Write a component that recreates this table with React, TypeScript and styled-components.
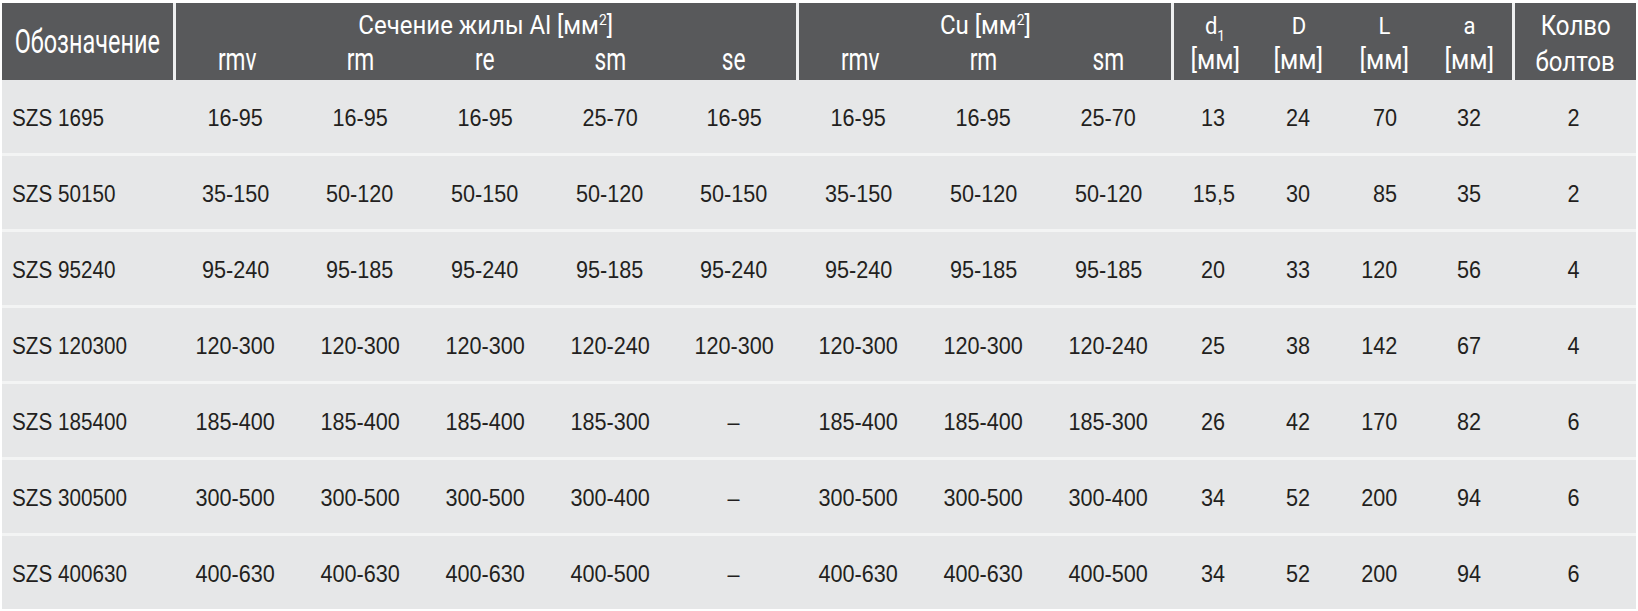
import styled, { createGlobalStyle } from "styled-components";

const GlobalStyle = createGlobalStyle`
  html, body {
    margin: 0;
    padding: 0;
    background: #ffffff;
  }
  body {
    width: 1638px;
    height: 611px;
    overflow: hidden;
  }
`;

// column widths measured from the sheet
const COLS =
  "171px 125px 124px 126px 124px 124px 125px 125px 125px 85px 85px 86px 85px 124px";

const Table = styled.div`
  margin: 3px 0 0 2px;
  width: 1634px;
  display: flex;
  flex-direction: column;
`;

const Head = styled.div`
  display: grid;
  grid-template-columns: ${COLS};
  grid-template-rows: 40px 37px;
  background: #58595b;
  color: #ffffff;
  font-family: Roboto, "Liberation Sans", sans-serif;
`;

interface HeadCellProps {
  $col: string;
  $row: string;
  $divider?: boolean;
  $middle?: boolean;
  $pad?: number;
}

const HeadCell = styled.div<HeadCellProps>`
  grid-column: ${(p) => p.$col};
  grid-row: ${(p) => p.$row};
  display: flex;
  justify-content: center;
  align-items: ${(p) => (p.$middle ? "center" : "flex-end")};
  padding-bottom: ${(p) => p.$pad ?? 0}px;
  border-left: ${(p) => (p.$divider ? "3px solid #eeeff0" : "none")};
  box-sizing: border-box;
`;

const Label = styled.span<{ $size: number; $squeeze: number }>`
  display: inline-block;
  font-size: ${(p) => p.$size}px;
  line-height: 1;
  white-space: nowrap;
  transform: scaleX(${(p) => p.$squeeze});

  sup {
    font-size: 0.58em;
    vertical-align: 0.62em;
    line-height: 0;
  }
  sub {
    font-size: 0.62em;
    vertical-align: -0.45em;
    line-height: 0;
  }
`;

const Body = styled.div`
  display: flex;
  flex-direction: column;
  gap: 3px;
  background: #f3f4f4;
`;

const Row = styled.div`
  display: grid;
  grid-template-columns: ${COLS};
  height: 73px;
  background: #e6e7e8;
`;

type Align = "left" | "center" | "right";

const Cell = styled.div<{ $align: Align }>`
  display: flex;
  align-items: center;
  justify-content: ${(p) =>
    p.$align === "left" ? "flex-start" : p.$align === "right" ? "flex-end" : "center"};
  padding: 4px ${(p) => (p.$align === "right" ? 30 : 0)}px 0
    ${(p) => (p.$align === "left" ? 10 : 0)}px;
  font-family: "Liberation Sans", Arial, sans-serif;
  font-size: 23.5px;
  color: #231f20;
`;

const Value = styled.span<{ $align: Align }>`
  display: inline-block;
  line-height: 1;
  white-space: nowrap;
  transform: scaleX(${(p) => (p.$align === "left" ? 0.88 : 0.92)});
  transform-origin: ${(p) => p.$align} center;
`;

const align: Align[] = [
  "left", "center", "center", "center", "center", "center", "center",
  "center", "center", "center", "center", "right", "center", "center",
];

const rows: string[][] = [
  ["SZS 1695", "16-95", "16-95", "16-95", "25-70", "16-95", "16-95", "16-95", "25-70", "13", "24", "70", "32", "2"],
  ["SZS 50150", "35-150", "50-120", "50-150", "50-120", "50-150", "35-150", "50-120", "50-120", "15,5", "30", "85", "35", "2"],
  ["SZS 95240", "95-240", "95-185", "95-240", "95-185", "95-240", "95-240", "95-185", "95-185", "20", "33", "120", "56", "4"],
  ["SZS 120300", "120-300", "120-300", "120-300", "120-240", "120-300", "120-300", "120-300", "120-240", "25", "38", "142", "67", "4"],
  ["SZS 185400", "185-400", "185-400", "185-400", "185-300", "–", "185-400", "185-400", "185-300", "26", "42", "170", "82", "6"],
  ["SZS 300500", "300-500", "300-500", "300-500", "300-400", "–", "300-500", "300-500", "300-400", "34", "52", "200", "94", "6"],
  ["SZS 400630", "400-630", "400-630", "400-630", "400-500", "–", "400-630", "400-630", "400-500", "34", "52", "200", "94", "6"],
];

const alSub = ["rmv", "rm", "re", "sm", "se"];
const cuSub = ["rmv", "rm", "sm"];
const dims = ["D", "L", "a"];

export default function App() {
  return (
    <>
      <GlobalStyle />
      <Table>
        <Head>
          <HeadCell $col="1" $row="1 / 3" $middle>
            <Label $size={33} $squeeze={0.71}>Обозначение</Label>
          </HeadCell>

          <HeadCell $col="2 / 7" $row="1" $divider $pad={5}>
            <Label $size={25} $squeeze={0.96}>
              Сечение жилы Al [мм<sup>2</sup>]
            </Label>
          </HeadCell>
          {alSub.map((s, i) => (
            <HeadCell key={"al" + s} $col={String(2 + i)} $row="2" $divider={i === 0} $pad={5}>
              <Label $size={32} $squeeze={0.71}>{s}</Label>
            </HeadCell>
          ))}

          <HeadCell $col="7 / 10" $row="1" $divider $pad={5}>
            <Label $size={25} $squeeze={0.96}>
              Cu [мм<sup>2</sup>]
            </Label>
          </HeadCell>
          {cuSub.map((s, i) => (
            <HeadCell key={"cu" + s} $col={String(7 + i)} $row="2" $divider={i === 0} $pad={5}>
              <Label $size={32} $squeeze={0.71}>{s}</Label>
            </HeadCell>
          ))}

          <HeadCell $col="10" $row="1" $divider $pad={5}>
            <Label $size={24} $squeeze={0.92}>
              d<sub>1</sub>
            </Label>
          </HeadCell>
          <HeadCell $col="10" $row="2" $divider $pad={6}>
            <Label $size={28} $squeeze={0.88}>[мм]</Label>
          </HeadCell>
          {dims.map((d, i) => (
            <HeadCell key={"dt" + d} $col={String(11 + i)} $row="1" $pad={5}>
              <Label $size={24} $squeeze={0.92}>{d}</Label>
            </HeadCell>
          ))}
          {dims.map((d, i) => (
            <HeadCell key={"du" + d} $col={String(11 + i)} $row="2" $pad={6}>
              <Label $size={28} $squeeze={0.88}>[мм]</Label>
            </HeadCell>
          ))}

          <HeadCell $col="14" $row="1" $divider $pad={3}>
            <Label $size={28} $squeeze={0.86}>Колво</Label>
          </HeadCell>
          <HeadCell $col="14" $row="2" $divider $pad={4}>
            <Label $size={28} $squeeze={0.86}>болтов</Label>
          </HeadCell>
        </Head>

        <Body>
          {rows.map((r) => (
            <Row key={r[0]}>
              {r.map((v, i) => (
                <Cell key={i} $align={align[i]}>
                  <Value $align={align[i]}>{v}</Value>
                </Cell>
              ))}
            </Row>
          ))}
        </Body>
      </Table>
    </>
  );
}
